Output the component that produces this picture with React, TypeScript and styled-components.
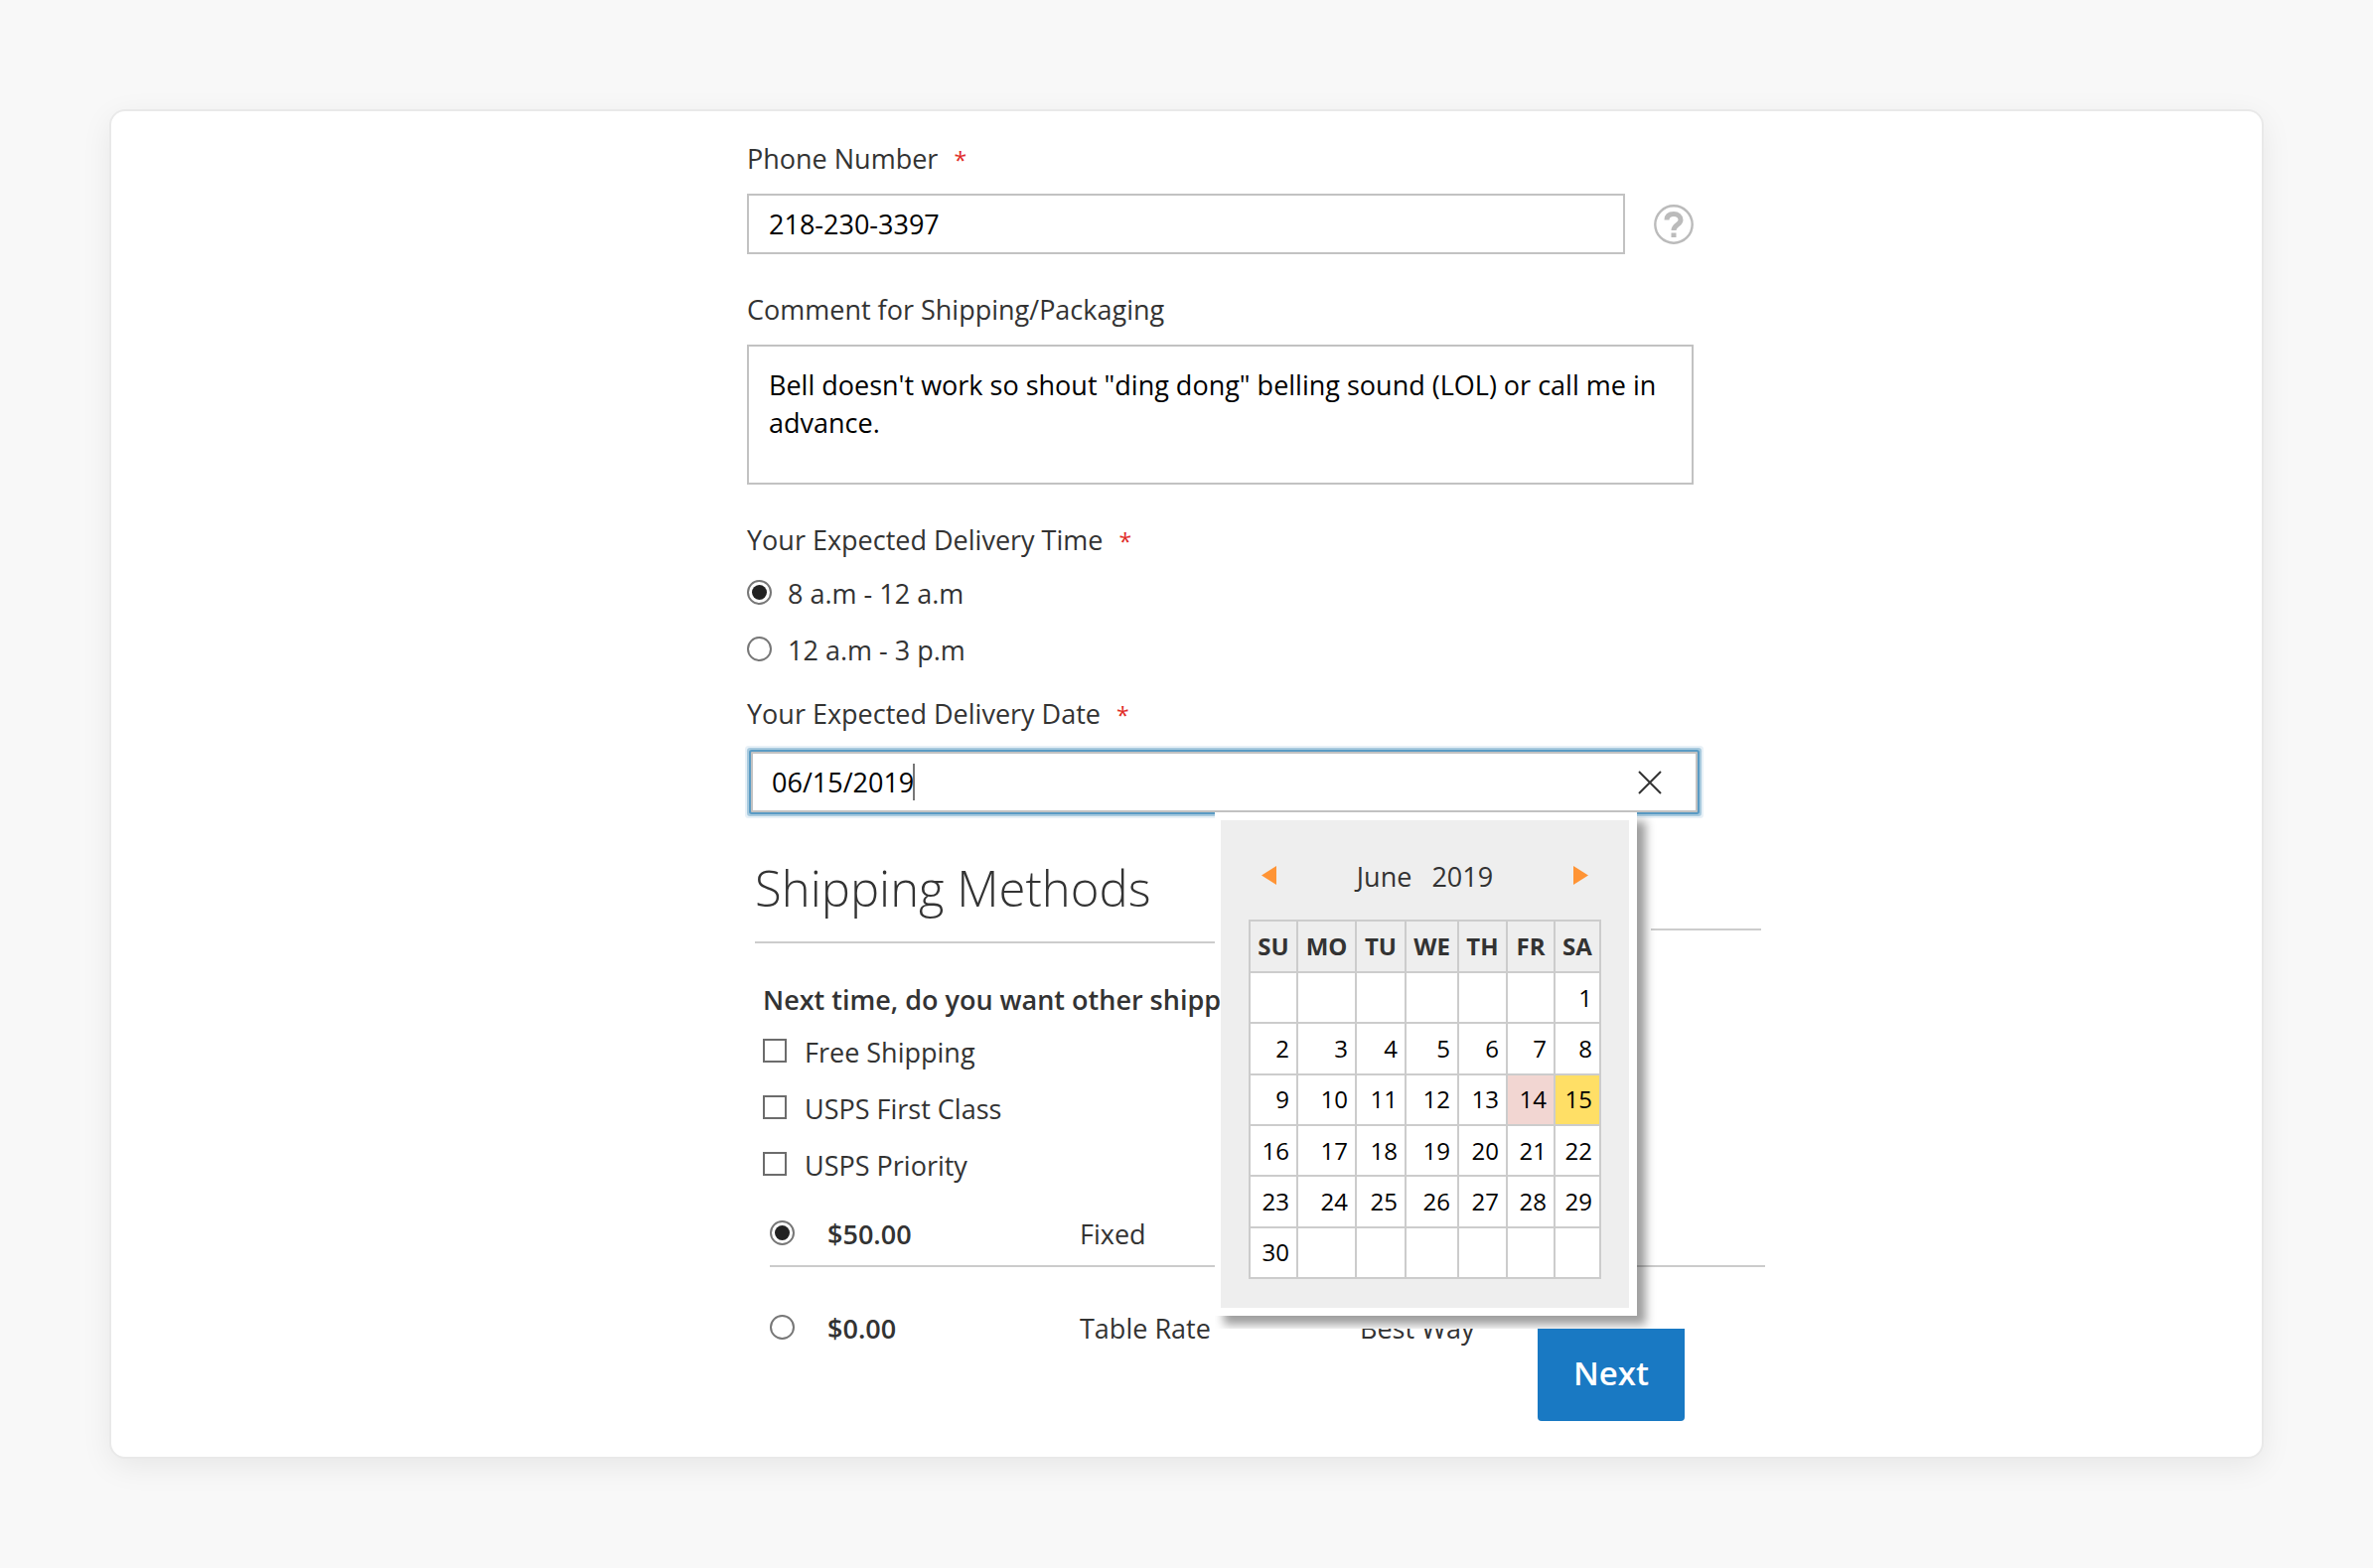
import React, { useState } from "react";
import styled, { createGlobalStyle } from "styled-components";

const GlobalStyle = createGlobalStyle`
  *, *::before, *::after { box-sizing: border-box; }
  body {
    margin: 0;
    background: #f8f8f8;
    color: #333;
    font-family: "Open Sans", "Noto Sans", sans-serif;
    font-size: 27px;
    line-height: 38px;
  }
  button, input, textarea { font: inherit; color: inherit; margin: 0; }
`;

const Page = styled.main`
  padding: 112px;
`;

const Card = styled.section`
  padding: 29px 24px 36px;
  background: #fff;
  border-radius: 14px;
  box-shadow: 0 0 0 2px #e9e9e9, 0 8px 32px rgba(0, 0, 0, 0.08);
`;

const Form = styled.form`
  max-width: 1165px;
  margin: 0 auto;
  padding-left: 140px;
`;

const Field = styled.div`
  max-width: 953px;
  margin-bottom: 37px;
`;

const Label = styled.label`
  display: block;
  margin-bottom: 16px;
`;

const Required = styled.span`
  margin-left: 16px;
  color: #e02b27;
  font-size: 23px;
  line-height: 1;
`;

const InputRow = styled.div`
  display: flex;
  align-items: center;
  gap: 29px;
`;

const TextInput = styled.input`
  flex: 1;
  min-width: 0;
  height: 61px;
  padding: 0 20px;
  border: 2px solid #c2c2c2;
  background: #fff;
  color: #000;
`;

const TextArea = styled.textarea`
  display: block;
  width: 100%;
  height: 141px;
  padding: 20px;
  border: 2px solid #c2c2c2;
  background: #fff;
  color: #000;
  resize: none;
  overflow: hidden;
`;

const HelpButton = styled.button`
  display: flex;
  flex: none;
  padding: 0;
  border: 0;
  background: none;
  color: #bbb;
`;

const Group = styled.fieldset`
  margin: 0 0 26px;
  padding: 0;
  border: 0;
`;

const Legend = styled.legend`
  margin-bottom: 16px;
  padding: 0;
`;

const Options = styled.div`
  display: flex;
  flex-direction: column;
  gap: 19px;
`;

const Option = styled.label`
  display: flex;
  align-items: center;
  gap: 16px;
`;

const Radio = styled.input.attrs({ type: "radio" })`
  appearance: none;
  display: grid;
  place-items: center;
  flex: none;
  width: 25px;
  height: 25px;
  margin-bottom: 4px;
  border: 2px solid #777;
  border-radius: 50%;
  background: #fff;
  &:checked::after {
    content: "";
    width: 15px;
    height: 15px;
    border-radius: 50%;
    background: #222;
  }
`;

const Checkbox = styled.input.attrs({ type: "checkbox" })`
  appearance: none;
  flex: none;
  width: 24px;
  height: 24px;
  margin: 0 2px 4px 0;
  border: 2px solid #6c6c6c;
  background: #fff;
  &:checked {
    background: #222;
    box-shadow: inset 0 0 0 3px #fff;
  }
`;

const DateLabel = styled(Label)`
  margin-bottom: 19px;
`;

const DateBox = styled.div`
  position: relative;
  display: flex;
  align-items: center;
  max-width: 953px;
  height: 61px;
  margin-left: 4px;
  padding: 0 34px 0 19px;
  border: 2px solid #c2c2c2;
  border-radius: 1px;
  background: #fff;
  box-shadow: 0 0 0 2px #5a9bc4, 0 0 0 4px #a8cade, 0 0 0 6px #e8f1f7;
`;

const DateInput = styled.input`
  width: 142px;
  padding: 0;
  border: 0;
  outline: 0;
  background: none;
  color: #000;
`;

const Caret = styled.span`
  width: 2px;
  height: 37px;
  background: #777;
`;

const ClearButton = styled.button`
  display: flex;
  margin-left: auto;
  padding: 0;
  border: 0;
  background: none;
`;

const Popup = styled.div`
  position: absolute;
  z-index: 1;
  top: 59px;
  left: 465px;
  width: 425px;
  padding-bottom: 13px;
  background: #fff;
  clip-path: inset(0 -24px 0 0);
`;

const PopupFrame = styled.div`
  padding: 8px 8px 8px 6px;
  background: #fff;
  box-shadow: 9px 9px 9px rgba(0, 0, 0, 0.38);
`;

const Calendar = styled.div`
  padding: 38px 28px 29px;
  background: #eee;
`;

const CalendarHeader = styled.div`
  display: flex;
  align-items: center;
  justify-content: space-between;
  margin-bottom: 24px;
  padding: 0 13px;
`;

const MonthTitle = styled.div`
  display: flex;
  gap: 20px;
`;

const ArrowButton = styled.button`
  display: flex;
  padding: 0 0 4px;
  border: 0;
  background: none;
  color: #ff9435;
`;

const Days = styled.table`
  width: 355px;
  height: 362px;
  border-collapse: collapse;
  table-layout: fixed;
  font-size: 24px;
  th, td {
    padding: 0;
    border: 2px solid #ccc;
  }
  th { height: 52px; font-weight: 700; }
  td { background: #fff; color: #000; }
`;

const DayColumn = styled.col<{ $width: number }>`
  width: ${(p) => p.$width}px;
`;

const DayButton = styled.button<{ $tone?: "today" | "selected" }>`
  display: block;
  width: 100%;
  height: 49px;
  padding: 0 7px 0 0;
  border: 0;
  background: ${(p) =>
    p.$tone === "today" ? "#f2d6d2" : p.$tone === "selected" ? "#ffdf66" : "none"};
  text-align: right;
`;

const MethodsHeader = styled.div`
  display: grid;
  grid-template-columns: 1fr 111px;
  column-gap: 24px;
  align-items: start;
  margin: 54px 4px 38px 8px;
`;

const Title = styled.h2`
  height: 78px;
  margin: 0;
  border-bottom: 2px solid #ccc;
  font-size: 49px;
  font-weight: 300;
  line-height: 44px;
`;

const TitleRule = styled.div`
  height: 65px;
  border-bottom: 2px solid #ccc;
`;

const Question = styled.legend`
  position: relative;
  z-index: 2;
  margin-bottom: 15px;
  padding: 0;
  font-weight: 600;
`;

const MethodChoices = styled.fieldset`
  margin: 0 0 31px 16px;
  padding: 0;
  border: 0;
`;

const Rates = styled.div`
  margin-left: 23px;
`;

const Rate = styled.label`
  display: grid;
  grid-template-columns: 58px 254px 282px 1fr;
  align-items: center;
  padding-bottom: 12px;
  &:not(:last-child) {
    margin-bottom: 43px;
    border-bottom: 2px solid #ccc;
  }
`;

const Price = styled.span`
  font-weight: 600;
`;

const Actions = styled.div`
  display: flex;
  justify-content: flex-end;
  margin: -31px 81px 0 0;
`;

const NextButton = styled.button`
  position: relative;
  z-index: 2;
  width: 148px;
  height: 93px;
  padding: 0 0 4px;
  border: 0;
  border-radius: 0 0 4px 4px;
  background: #1979c3;
  color: #fff;
  font-size: 33px;
  font-weight: 600;
`;

const HelpIcon = () => (
  <svg width="40" height="40" viewBox="0 0 40 40" fill="none" stroke="currentColor" aria-hidden="true">
    <circle cx="20" cy="20" r="18.7" strokeWidth="2.4" />
    <path d="M13 15.5C13 11 16 9.5 20 9.5s7 2.2 7 6c0 5-7 4.600-7 10.500" strokeWidth="5" />
    <path d="M17.500 28.500h5v4.500h-5z" fill="currentColor" stroke="none" />
  </svg>
);

const CloseIcon = () => (
  <svg width="24" height="24" viewBox="0 0 24 24" stroke="#333" strokeWidth="2" aria-hidden="true">
    <path d="M1 1l22 22M23 1L1 23" />
  </svg>
);

const Triangle = ({ points }: { points: string }) => (
  <svg width="15" height="19" viewBox="0 0 15 19" fill="currentColor" aria-hidden="true">
    <polygon points={points} />
  </svg>
);

const weekdays = ["SU", "MO", "TU", "WE", "TH", "FR", "SA"];
const columnWidths = [48, 59, 50, 53, 49, 48, 46];
const startOffset = 6;
const daysInMonth = 30;
const weeks = Array.from({ length: 6 }, (_, w) =>
  Array.from({ length: 7 }, (_, d) => {
    const day = w * 7 + d - startOffset + 1;
    return day > 0 && day <= daysInMonth ? day : null;
  })
);

const times = ["8 a.m - 12 a.m", "12 a.m - 3 p.m"];
const otherMethods = ["Free Shipping", "USPS First Class", "USPS Priority"];
const rates = [
  { price: "$50.00", name: "Fixed", carrier: "" },
  { price: "$0.00", name: "Table Rate", carrier: "Best Way" },
];

const pad = (n: number) => String(n).padStart(2, "0");

export default function App() {
  const [day, setDay] = useState<number | null>(15);
  const date = day ? `06/${pad(day)}/2019` : "";

  return (
    <>
      <GlobalStyle />
      <Page>
        <Card>
          <Form onSubmit={(e) => e.preventDefault()}>
            <Field>
              <Label htmlFor="phone">
                Phone Number<Required>*</Required>
              </Label>
              <InputRow>
                <TextInput id="phone" type="tel" defaultValue="218-230-3397" />
                <HelpButton type="button" aria-label="Help">
                  <HelpIcon />
                </HelpButton>
              </InputRow>
            </Field>

            <Field>
              <Label htmlFor="comment">Comment for Shipping/Packaging</Label>
              <TextArea
                id="comment"
                spellCheck={false}
                defaultValue={`Bell doesn't work so shout "ding dong" belling sound (LOL) or call me in advance.`}
              />
            </Field>

            <Group>
              <Legend>
                Your Expected Delivery Time<Required>*</Required>
              </Legend>
              <Options>
                {times.map((t, i) => (
                  <Option key={t}>
                    <Radio name="time" defaultChecked={i === 0} />
                    {t}
                  </Option>
                ))}
              </Options>
            </Group>

            <DateLabel htmlFor="date">
              Your Expected Delivery Date<Required>*</Required>
            </DateLabel>
            <DateBox>
              <DateInput id="date" value={date} readOnly />
              <Caret />
              <ClearButton type="button" aria-label="Clear date" onClick={() => setDay(null)}>
                <CloseIcon />
              </ClearButton>
              <Popup>
                <PopupFrame>
                  <Calendar>
                    <CalendarHeader>
                      <ArrowButton type="button" aria-label="Previous month">
                        <Triangle points="0,9.5 15,0 15,19" />
                      </ArrowButton>
                      <MonthTitle>
                        <span>June</span>
                        <span>2019</span>
                      </MonthTitle>
                      <ArrowButton type="button" aria-label="Next month">
                        <Triangle points="15,9.5 0,0 0,19" />
                      </ArrowButton>
                    </CalendarHeader>
                    <Days>
                      <colgroup>
                        {columnWidths.map((w, i) => (
                          <DayColumn key={i} $width={w} />
                        ))}
                      </colgroup>
                      <thead>
                        <tr>
                          {weekdays.map((d) => (
                            <th key={d} scope="col">{d}</th>
                          ))}
                        </tr>
                      </thead>
                      <tbody>
                        {weeks.map((week, w) => (
                          <tr key={w}>
                            {week.map((d, i) => (
                              <td key={i}>
                                {d && (
                                  <DayButton
                                    type="button"
                                    $tone={d === day ? "selected" : d === 14 ? "today" : undefined}
                                    onClick={() => setDay(d)}
                                  >
                                    {d}
                                  </DayButton>
                                )}
                              </td>
                            ))}
                          </tr>
                        ))}
                      </tbody>
                    </Days>
                  </Calendar>
                </PopupFrame>
              </Popup>
            </DateBox>

            <MethodsHeader>
              <Title>Shipping Methods</Title>
              <TitleRule />
            </MethodsHeader>

            <MethodChoices>
              <Question>Next time, do you want other shipp</Question>
              <Options>
                {otherMethods.map((m) => (
                  <Option key={m}>
                    <Checkbox name="other" />
                    {m}
                  </Option>
                ))}
              </Options>
            </MethodChoices>

            <Rates>
              {rates.map((r, i) => (
                <Rate key={r.name}>
                  <Radio name="rate" defaultChecked={i === 0} />
                  <Price>{r.price}</Price>
                  <span>{r.name}</span>
                  <span>{r.carrier}</span>
                </Rate>
              ))}
            </Rates>

            <Actions>
              <NextButton type="submit">Next</NextButton>
            </Actions>
          </Form>
        </Card>
      </Page>
    </>
  );
}
